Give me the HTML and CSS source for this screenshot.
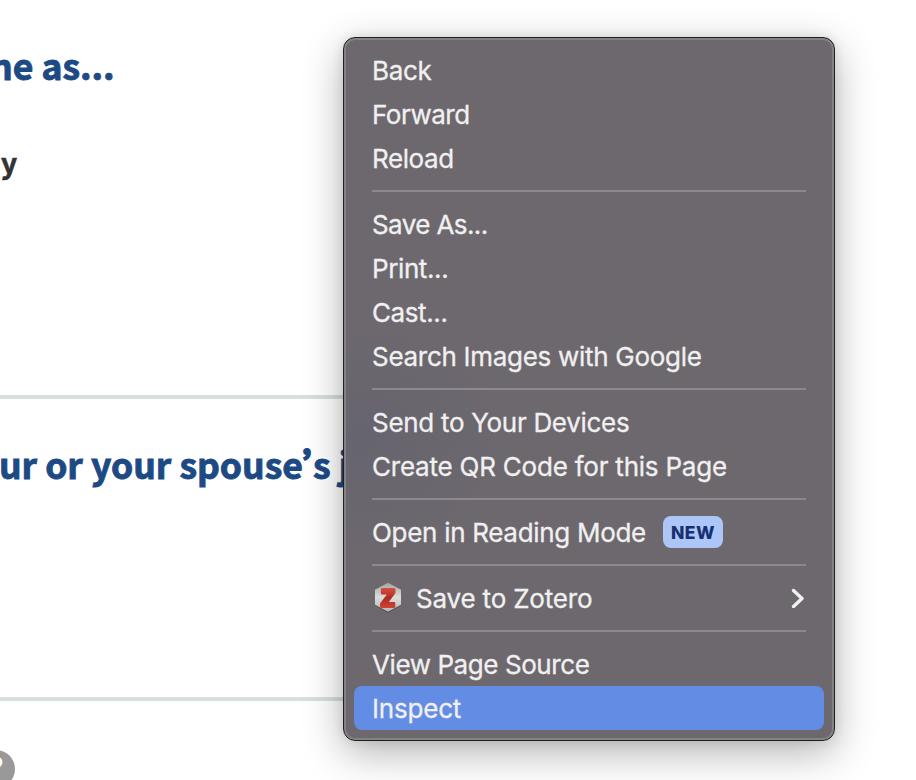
FILE: index.html
```
<!DOCTYPE html>
<html lang="en">
<head>
<meta charset="utf-8">
<title>Form</title>
<link rel="stylesheet" href="styles.css">
</head>
<body>
<main class="page">
  <section class="block first">
    <h2 class="heading same">ne as...</h2>
    <p class="label">ay</p>
  </section>
  <section class="block second">
    <h2 class="heading job">ur or your spouse<span class="apos">’</span>s j</h2>
  </section>
  <section class="block third">
    <span class="help">?</span>
  </section>
</main>
<nav class="menu">
  <div class="item"><span class="t-back">Back</span></div>
  <div class="item"><span class="t-forward">Forward</span></div>
  <div class="item"><span class="t-reload">Reload</span></div>
  <hr class="sep">
  <div class="item"><span class="t-saveas">Save As...</span></div>
  <div class="item"><span class="t-print">Print...</span></div>
  <div class="item"><span class="t-cast">Cast...</span></div>
  <div class="item"><span class="t-search">Search Images with Google</span></div>
  <hr class="sep">
  <div class="item"><span class="t-send">Send to Your Devices</span></div>
  <div class="item"><span class="t-qr">Create QR Code for this Page</span></div>
  <hr class="sep">
  <div class="item"><span class="t-read">Open in Reading Mode</span><span class="badge">NEW</span></div>
  <hr class="sep">
  <div class="item">
    <svg class="zotero" width="32" height="32" viewBox="0 0 32 32">
      <defs>
        <linearGradient id="silver" x1="0" y1="0" x2="0" y2="1"><stop offset="0" stop-color="#a5a5a5"/><stop offset=".5" stop-color="#dcdcdc"/><stop offset="1" stop-color="#b5b5b5"/></linearGradient>
        <linearGradient id="red" x1="0" y1="0" x2="0" y2="1"><stop offset="0" stop-color="#d84f40"/><stop offset=".5" stop-color="#ae2b22"/><stop offset="1" stop-color="#cf4234"/></linearGradient>
      </defs>
      <path d="M16 1.500 29 8.500V23.500L16 31 3 23.500V8.500Z" fill="#4f4b4f"/>
      <path d="M16 .8 29 7.800V22.800L16 29.800 3 22.800V7.800Z" fill="url(#silver)"/>
      <path d="M9.500 6H22.500L23.500 7V11L16.800 20H22.500L23.300 21V25L22.500 26H9L8 25V21.500L14.800 12.500H9.500L8.800 11.500V7Z" fill="url(#red)"/>
    </svg>
    <span class="t-zotero">Save to Zotero</span>
    <svg class="chevron" width="14" height="20" viewBox="0 0 14 20"><path d="M2.500 2.500 11 10.500 2.500 18.500" fill="none" stroke="#f1f0f1" stroke-width="3.400" stroke-linecap="round" stroke-linejoin="round"/></svg>
  </div>
  <hr class="sep">
  <div class="item"><span class="t-source">View Page Source</span></div>
  <div class="item active"><span class="t-inspect">Inspect</span></div>
</nav>
</body>
</html>
```
FILE: styles.css
```
* { box-sizing: border-box; }
body { margin: 0; width: 916px; height: 780px; overflow: hidden; background: #fff; }
.page { width: 345px; height: 780px; overflow: hidden; font-family: "Noto Sans CJK SC", "Noto Sans", sans-serif; }
.block { display: flex; flex-direction: column; align-items: flex-start; }
.first { height: 399px; padding-top: 40px; border-bottom: 4px solid #d7dfdf; }
.second { height: 302px; padding-top: 40px; border-bottom: 4px solid #d7dfdf; }
.third { padding-top: 49px; }
.heading { margin: 0; font-size: 35.5px; line-height: 50px; font-weight: 700; color: #1d4a85; white-space: nowrap; -webkit-text-stroke: .9px #1d4a85; }
.same { margin-left: -10px; }
.job { margin-left: -1px; }
.apos { letter-spacing: -25.3px; -webkit-text-stroke-width: 1.8px; }
.label { margin: 52px 0 0 -15.500px; font-size: 28px; line-height: 40px; font-weight: 700; color: #333; -webkit-text-stroke: .6px #333; }
.help { width: 38px; height: 38px; margin-left: -23px; border-radius: 50%; background: #999; color: #fff; font-size: 30px; line-height: 34px; font-weight: 700; text-align: center; }

.menu {
  position: absolute; left: 343px; top: 37px; width: 492px; height: 704px;
  padding: 10px; border: 1px solid #202020; border-radius: 12px;
  background: radial-gradient(ellipse 150px 120px at 15px 400px, #66646e, #6d686e);
  box-shadow: inset 0 0 0 2px #858286, 0 12px 40px rgba(0,0,0,.3), 0 0 12px rgba(0,0,0,.1);
  font-family: Inter, "Liberation Sans", sans-serif; font-size: 26px; color: #f1f0f1;
}
.item { display: flex; align-items: center; height: 44px; padding: 0 18px; line-height: 44px; white-space: nowrap; border-radius: 8px; }
.item > span:first-of-type { padding-top: 2px; -webkit-text-stroke: .3px #f1f0f1; }
.t-back { letter-spacing: -.35px; }
.t-forward { letter-spacing: -.5px; }
.t-reload { letter-spacing: -.4px; }
.t-saveas { letter-spacing: -.6px; }
.t-print { letter-spacing: -.4px; }
.t-cast { letter-spacing: -.4px; }
.t-search { letter-spacing: -.29px; }
.t-send { letter-spacing: -.3px; }
.t-qr { letter-spacing: -.22px; }
.t-read { letter-spacing: -.3px; }
.t-zotero { letter-spacing: -.18px; }
.t-source { letter-spacing: -.42px; }
.t-inspect { letter-spacing: -.2px; }
.active { background: #638ce5; }
.sep { height: 2px; margin: 10px 18px; border: 0; background: #8c888d; }
.badge { width: 60px; height: 32px; margin-left: 17px; border-radius: 8px; background: #adc6f8; color: #193070; font-size: 17.500px; line-height: 33px; font-weight: 800; letter-spacing: .5px; text-align: center; }
.zotero { margin-right: 12px; }
.chevron { margin-left: auto; margin-right: 1px; }
```
